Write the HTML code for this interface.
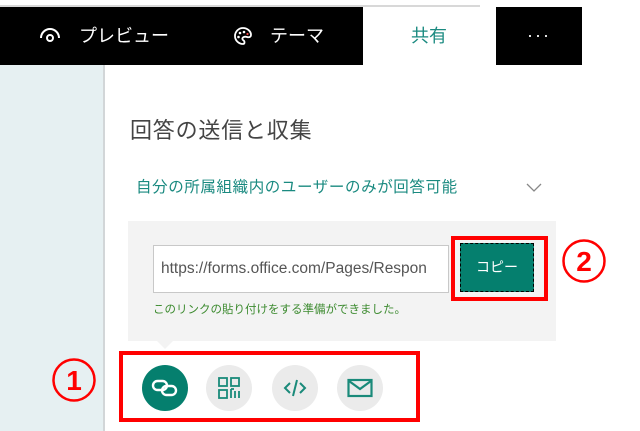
<!DOCTYPE html>
<html><head><meta charset="utf-8"><style>
*{margin:0;padding:0;box-sizing:border-box}
body{width:640px;height:431px;background:#fff;position:relative;overflow:hidden;font-family:"Liberation Sans","Noto Sans CJK JP",sans-serif}
.a{position:absolute}
</style></head><body>
<div class="a" style="left:0;top:5px;width:480px;height:2px;background:#d8d8d8"></div>
<div class="a" style="left:0;top:7px;width:582px;height:58px;background:#000"></div>
<div class="a" style="left:363px;top:7px;width:133px;height:58px;background:#fff"></div>
<svg class="a" style="left:39px;top:27px" width="22" height="18" viewBox="0 0 22 18"><path d="M2 11 A9 9 0 0 1 20 11" fill="none" stroke="#fff" stroke-width="2"/><circle cx="11" cy="11" r="3" fill="none" stroke="#fff" stroke-width="2"/></svg>
<div class="a" style="left:79px;top:25px;color:#fff;font-size:18px;line-height:22px">プレビュー</div>
<svg class="a" style="left:233px;top:26px" width="20" height="20" viewBox="0 0 20 20"><path d="M10 2 A8 8 0 1 0 10 18 C12 18 12 15 10 14 C8 12 11 10 14 11 C17 12 18 10 18 9 C18 5 14 2 10 2Z" fill="none" stroke="#fff" stroke-width="1.8"/><circle cx="7" cy="7" r="1.3" fill="#fff"/><circle cx="11" cy="6" r="1.3" fill="#fff"/><circle cx="5.5" cy="11" r="1.3" fill="#fff"/><circle cx="14.5" cy="8" r="1.1" fill="#e44"/></svg>
<div class="a" style="left:270px;top:25px;color:#fff;font-size:18px;line-height:22px">テーマ</div>
<div class="a" style="left:411px;top:25px;color:#1a8a80;font-size:18px;line-height:22px">共有</div>
<div class="a" style="left:527px;top:24px;color:#fff;font-size:18px;line-height:22px;letter-spacing:2px">···</div>
<div class="a" style="left:0;top:65px;width:103px;height:366px;background:#e6f0f2"></div>
<div class="a" style="left:103px;top:65px;width:2px;height:366px;background:#d2d6d8"></div>
<div class="a" style="left:130px;top:117px;color:#444;font-size:22px;line-height:28px;letter-spacing:.8px">回答の送信と収集</div>
<div class="a" style="left:136px;top:177px;color:#1a8a80;font-size:15.5px;line-height:22px;letter-spacing:.6px">自分の所属組織内のユーザーのみが回答可能</div>
<svg class="a" style="left:526px;top:183px" width="16" height="10" viewBox="0 0 16 10"><path d="M1 1 L8 8 L15 1" fill="none" stroke="#888" stroke-width="1.3"/></svg>
<div class="a" style="left:128px;top:221px;width:428px;height:120px;background:#f3f3f3"></div>
<div class="a" style="left:157px;top:341px;width:0;height:0;border-left:8px solid transparent;border-right:8px solid transparent;border-top:8px solid #f3f3f3"></div>
<div class="a" style="left:153px;top:245px;width:296px;height:48px;background:#fff;border:1px solid #c8c8c8;color:#555;font-size:15.5px;line-height:46px;padding-left:7px;white-space:nowrap;overflow:hidden">https://forms.office.com/Pages/Respon</div>
<div class="a" style="left:460px;top:243px;width:74px;height:49px;background:#057f6e;border:1px dashed #000;color:#fff;font-size:14px;line-height:47px;text-align:center">コピー</div>
<div class="a" style="left:451px;top:236px;width:97px;height:65px;border:4px solid #f00"></div>
<div class="a" style="left:153px;top:302px;color:#3d8b30;font-size:11.5px;line-height:16px">このリンクの貼り付けをする準備ができました。</div>
<div class="a" style="left:119px;top:351px;width:301px;height:71px;border:4px solid #f00"></div>
<div class="a" style="left:142px;top:365px;width:46px;height:46px;border-radius:50%;background:#057f6e"></div>
<svg class="a" style="left:150px;top:377px" width="30" height="22" viewBox="0 0 30 22"><rect x="3" y="4" width="14" height="9" rx="4.5" fill="none" stroke="#fff" stroke-width="2.4"/><rect x="12" y="9" width="14" height="9" rx="4.5" fill="none" stroke="#fff" stroke-width="2.4"/></svg>
<div class="a" style="left:206px;top:365px;width:46px;height:46px;border-radius:50%;background:#ebebeb"></div>
<svg class="a" style="left:217px;top:376px" width="24" height="24" viewBox="0 0 24 24" fill="none" stroke="#1a8a7a" stroke-width="1.8"><rect x="2" y="2" width="8" height="8"/><rect x="14" y="2" width="8" height="8"/><rect x="2" y="14" width="8" height="8"/><path d="M14 13v9M18 15v7M22 15v7M14 13h3"/></svg>
<div class="a" style="left:272px;top:365px;width:46px;height:46px;border-radius:50%;background:#ebebeb"></div>
<svg class="a" style="left:283px;top:377px" width="24" height="22" viewBox="0 0 24 22" fill="none" stroke="#1a8a7a" stroke-width="2"><path d="M7 6 L2 11 L7 16M17 6 L22 11 L17 16M14 3 L10 19"/></svg>
<div class="a" style="left:337px;top:365px;width:46px;height:46px;border-radius:50%;background:#ebebeb"></div>
<svg class="a" style="left:347px;top:378px" width="26" height="20" viewBox="0 0 26 20" fill="none" stroke="#1a8a7a" stroke-width="2.2"><rect x="1.5" y="2" width="23" height="16"/><path d="M2 3 L13 11 L24 3"/></svg>
<svg class="a" style="left:51px;top:357px" width="46" height="46" viewBox="0 0 46 46"><circle cx="23" cy="23" r="20.5" fill="none" stroke="#f00" stroke-width="2.5"/><text x="23" y="33" text-anchor="middle" font-family="Liberation Sans" font-weight="bold" font-size="28" fill="#f00">1</text></svg>
<svg class="a" style="left:561px;top:239px" width="46" height="46" viewBox="0 0 46 46"><circle cx="23" cy="22" r="20.5" fill="none" stroke="#f00" stroke-width="2.5"/><text x="23" y="32" text-anchor="middle" font-family="Liberation Sans" font-weight="bold" font-size="28" fill="#f00">2</text></svg>
</body></html>
